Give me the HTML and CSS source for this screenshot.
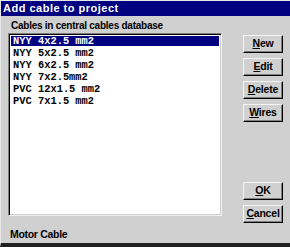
FILE: index.html
```html
<!DOCTYPE html>
<html>
<head>
<meta charset="utf-8">
<link rel="stylesheet" href="styles.css">
</head>
<body>
<div class="window">
  <div class="titlebar">Add cable to project</div>
  <div class="content">
    <div class="main">
      <div class="listcol">
        <div class="label">Cables in central cables database</div>
        <div class="listbox">
          <div class="row selected">NYY 4x2.5 mm2</div>
          <div class="row">NYY 5x2.5 mm2</div>
          <div class="row">NYY 6x2.5 mm2</div>
          <div class="row">NYY 7x2.5mm2</div>
          <div class="row">PVC 12x1.5 mm2</div>
          <div class="row">PVC 7x1.5 mm2</div>
        </div>
      </div>
      <div class="buttons">
        <div class="btn"><u>N</u>ew</div>
        <div class="btn"><u>E</u>dit</div>
        <div class="btn"><u>D</u>elete</div>
        <div class="btn"><u>W</u>ires</div>
        <div class="spacer"></div>
        <div class="btn"><u>O</u>K</div>
        <div class="btn"><u>C</u>ancel</div>
      </div>
    </div>
    <div class="status">Motor Cable</div>
  </div>
</div>
</body>
</html>
```
FILE: styles.css
```css
html, body {
  margin: 0;
  padding: 0;
  background: #d0d0d0;
}
.window {
  width: 290px;
  height: 247px;
  box-sizing: border-box;
  border-top: 1px solid #e8e8e8;
  border-left: 1px solid #e8e8e8;
  border-bottom: 4px solid #202020;
  background: #d0d0d0;
  font-family: "Liberation Sans", Arial, sans-serif;
  font-weight: bold;
  font-size: 11px;
  color: #000;
  display: flex;
  flex-direction: column;
  overflow: hidden;
}
.titlebar {
  height: 15px;
  line-height: 15px;
  background: #000080;
  color: #fff;
  padding-left: 2px;
  font-size: 11px;
  letter-spacing: 0.5px;
}
.content {
  flex: 1;
  display: flex;
  flex-direction: column;
  padding: 3px 6px 0 7px;
}
.main {
  display: flex;
  flex-direction: row;
  align-items: flex-start;
  height: 197px;
}
.listcol {
  width: 214px;
  display: flex;
  flex-direction: column;
}
.label {
  height: 14px;
  line-height: 14px;
  padding-left: 3px;
  font-size: 10px;
  letter-spacing: -0.25px;
}
.listbox {
  height: 183px;
  box-sizing: border-box;
  background: #fff;
  border-top: 1px solid #808080;
  border-left: 1px solid #808080;
  border-right: 1px solid #f0f0f0;
  border-bottom: 1px solid #f0f0f0;
  box-shadow: inset 1px 1px 0 #000, inset -1px -1px 0 #d0d0d0;
  padding: 2px 2px;
  font-family: "Liberation Mono", "DejaVu Sans Mono", monospace;
  font-size: 10.4px;
  font-weight: bold;
}
.row {
  height: 12px;
  line-height: 11px;
  padding-left: 2px;
}
.row.selected {
  background: #000080;
  color: #fff;
  height: 10px;
  line-height: 10px;
  margin-bottom: 2px;
}
.buttons {
  margin-left: 21px;
  margin-top: 16px;
  width: 40px;
  display: flex;
  flex-direction: column;
  gap: 5px;
  flex: none;
}
.spacer {
  height: 50px;
}
.btn {
  height: 18px;
  box-sizing: border-box;
  line-height: 15px;
  text-align: center;
  background: #d0d0d0;
  border-top: 1px solid #f4f4f4;
  border-left: 1px solid #f4f4f4;
  border-right: 1px solid #000;
  border-bottom: 1px solid #000;
  box-shadow: inset -1px -1px 0 #808080;
  font-size: 10.5px;
  letter-spacing: -0.2px;
}
.btn u {
  text-decoration: underline;
}
.status {
  margin-top: 11px;
  padding-left: 2px;
  height: 14px;
  line-height: 14px;
  font-size: 10.5px;
  letter-spacing: -0.3px;
}
```
